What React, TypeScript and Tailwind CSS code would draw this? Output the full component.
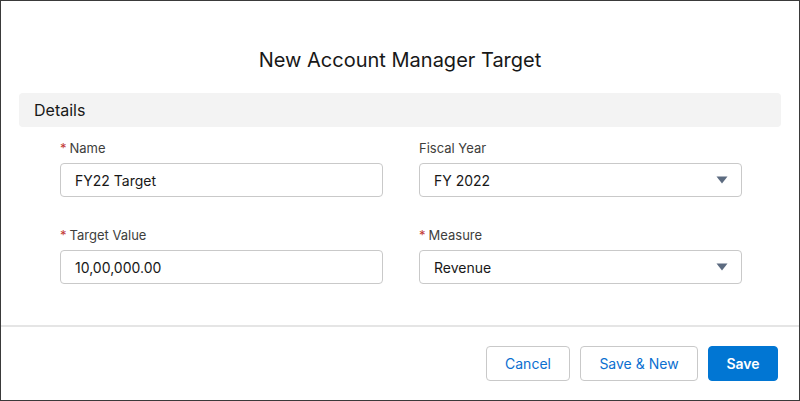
const Label = ({ text, required }: { text: string; required?: boolean }) => (
  <div className="flex h-[17px] items-center text-[13px] text-[#3e3e3c]">
    {required && <span className="mr-[3px] text-[#c23934]">*</span>}
    {text}
  </div>
);

const Caret = () => (
  <svg width="12" height="8" viewBox="0 0 12 8" className="text-[#5c6b80]">
    <path d="M0.5 0.5 L11.5 0.5 L6 7.5 Z" fill="currentColor" />
  </svg>
);

const Field = ({ label, value, required, select }: { label: string; value: string; required?: boolean; select?: boolean }) => (
  <div className="flex flex-col gap-[6px]">
    <Label text={label} required={required} />
    <div className="flex h-[34px] items-center justify-between rounded-[4px] border border-[#c9c9c9] bg-white pl-[14px] pr-[13px] text-[14px] text-[#181818]">
      <span>{value}</span>
      {select && <Caret />}
    </div>
  </div>
);

export default function App() {
  return (
    <div
      className="flex h-[401px] w-[800px] flex-col border border-[#3a3a3a] bg-white"
      style={{ fontFamily: "Inter, 'Liberation Sans', sans-serif" }}
    >
      <div className="flex h-[92px] items-center justify-center pt-[26px] text-[20px] text-[#181818]">
        New Account Manager Target
      </div>
      <div className="mx-[18px] flex h-[34px] items-center rounded-[4px] bg-[#f3f3f3] px-[15px] text-[16px] text-[#181818]">
        Details
      </div>
      <div className="grid grid-cols-2 gap-x-[36px] gap-y-[30px] pl-[59px] pr-[57px] pt-[13px]">
        <Field label="Name" value="FY22 Target" required />
        <Field label="Fiscal Year" value="FY 2022" select />
        <Field label="Target Value" value="10,00,000.00" required />
        <Field label="Measure" value="Revenue" required select />
      </div>
      <div className="mt-[41px] border-t-2 border-[#e5e5e5]" />
      <div className="flex justify-end gap-[10px] pr-[21px] pt-[19px] text-[14px]">
        <button className="h-[35px] w-[84px] rounded-[4px] border border-[#c9c9c9] bg-white text-[#0b6fd0]">Cancel</button>
        <button className="h-[35px] w-[118px] rounded-[4px] border border-[#c9c9c9] bg-white text-[#0b6fd0]">Save &amp; New</button>
        <button className="h-[35px] w-[70px] rounded-[4px] border border-[#0176d3] bg-[#0176d3] font-semibold text-white">Save</button>
      </div>
    </div>
  );
}
